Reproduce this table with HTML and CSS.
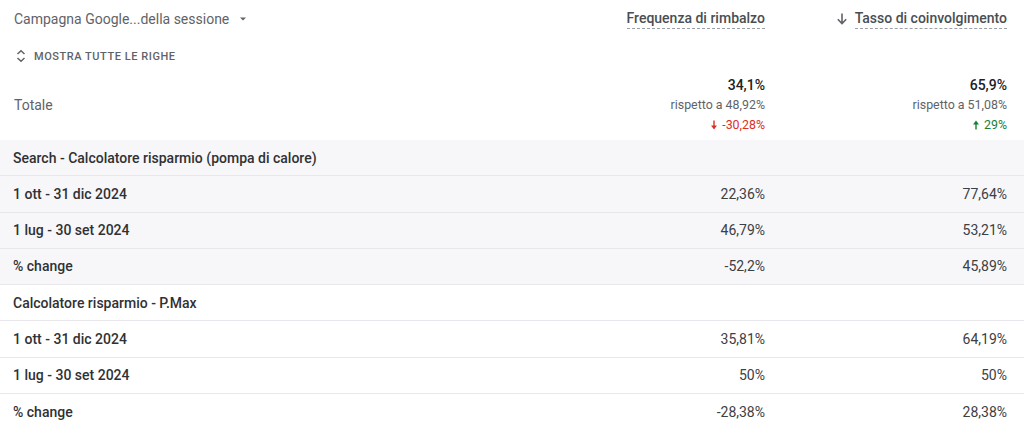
FILE: index.html
```html
<!DOCTYPE html>
<html lang="it">
<head>
<meta charset="utf-8">
<link rel="stylesheet" href="styles.css">
</head>
<body>
<div class="table">
  <div class="row head">
    <div class="label dim">
      <span>Campagna Google...della sessione</span>
      <svg class="caret" width="10" height="10" viewBox="0 0 10 10"><path d="M2 3.5h6L5 6.5z" fill="#5f6368"/></svg>
    </div>
    <div class="cell"><span class="metric">Frequenza di rimbalzo</span></div>
    <div class="cell wide">
      <svg class="sort" width="14" height="14" viewBox="0 0 14 14"><path d="M7 1.5v10M2.8 7.3L7 11.5l4.2-4.2" fill="none" stroke="#5f6368" stroke-width="1.6"/></svg>
      <span class="metric">Tasso di coinvolgimento</span>
    </div>
  </div>
  <div class="showall">
    <svg width="12" height="14" viewBox="0 0 12 14"><path d="M2.5 5L6 1.8 9.5 5M2.5 9L6 12.2 9.5 9" fill="none" stroke="#5f6368" stroke-width="1.5"/></svg>
    <span>MOSTRA TUTTE LE RIGHE</span>
  </div>
  <div class="row totals">
    <div class="label dim">Totale</div>
    <div class="cell stack">
      <div class="big">34,1%</div>
      <div class="cmp">rispetto a 48,92%</div>
      <div class="delta down"><svg width="8" height="10" viewBox="0 0 8 10"><path d="M4 0.5v6" stroke="#d93025" stroke-width="1.4"/><path d="M1 5.5h6L4 9.5z" fill="#d93025"/></svg> -30,28%</div>
    </div>
    <div class="cell wide stack">
      <div class="big">65,9%</div>
      <div class="cmp">rispetto a 51,08%</div>
      <div class="delta up"><svg width="8" height="10" viewBox="0 0 8 10"><path d="M4 3.5v6" stroke="#188038" stroke-width="1.4"/><path d="M1 4.5h6L4 0.5z" fill="#188038"/></svg> 29%</div>
    </div>
  </div>

  <div class="row data shade"><div class="label">Search - Calcolatore risparmio (pompa di calore)</div><div class="cell"></div><div class="cell wide"></div></div>
  <div class="row data shade"><div class="label">1 ott - 31 dic 2024</div><div class="cell">22,36%</div><div class="cell wide">77,64%</div></div>
  <div class="row data shade"><div class="label">1 lug - 30 set 2024</div><div class="cell">46,79%</div><div class="cell wide">53,21%</div></div>
  <div class="row data shade"><div class="label">% change</div><div class="cell">-52,2%</div><div class="cell wide">45,89%</div></div>

  <div class="row data"><div class="label">Calcolatore risparmio - P.Max</div><div class="cell"></div><div class="cell wide"></div></div>
  <div class="row data"><div class="label">1 ott - 31 dic 2024</div><div class="cell">35,81%</div><div class="cell wide">64,19%</div></div>
  <div class="row data"><div class="label">1 lug - 30 set 2024</div><div class="cell">50%</div><div class="cell wide">50%</div></div>
  <div class="row data last"><div class="label">% change</div><div class="cell">-28,38%</div><div class="cell wide">28,38%</div></div>
</div>
</body>
</html>
```
FILE: styles.css
```css
* { box-sizing: border-box; }
html, body { margin: 0; padding: 0; background: #fff; }
body {
  font-family: Roboto, "Liberation Sans", Arial, sans-serif;
  font-size: 14px;
  color: #202124;
}
.table { width: 1024px; }
.row {
  display: flex;
  align-items: center;
  padding-right: 17px;
}
.label {
  flex: 1;
  padding-left: 13px;
  display: flex;
  align-items: center;
  font-weight: 500;
  color: #303134;
}
.label.dim { color: #5f6368; font-weight: 400; padding-left: 14px; }
.cell {
  width: 200px;
  text-align: right;
  color: #3c4043;
  display: flex;
  justify-content: flex-end;
  align-items: center;
}
.cell.wide { width: 242px; }
.head { height: 38px; }
.caret { margin-left: 9px; }
.metric {
  font-weight: 500;
  color: #4a4e52;
  border-bottom: 1px dashed #9aa0a6;
  padding-bottom: 1px;
  line-height: 18px;
}
.sort { margin-right: 6px; }
.showall {
  height: 34px;
  display: flex;
  align-items: center;
  padding-left: 15px;
  padding-top: 2px;
  font-size: 11px;
  font-weight: 500;
  letter-spacing: 0.55px;
  color: #5f6368;
}
.showall svg { margin-right: 7px; }
.totals { height: 68px; padding-top: 3px; padding-bottom: 5px; }
.stack { flex-direction: column; align-items: flex-end; }
.stack > div { line-height: 20px; }
.big { font-weight: 500; color: #202124; font-size: 14px; }
.cmp { font-size: 12.4px; color: #5f6368; }
.delta { font-size: 12.4px; display: flex; align-items: center; gap: 4px; }
.delta.down { color: #d93025; }
.delta.up { color: #188038; }
.data {
  height: 36.25px;
  border-bottom: 1px solid #e8e8ec;
}
.data.shade { background: #f7f7fa; }
.data.last { border-bottom: none; }
```
